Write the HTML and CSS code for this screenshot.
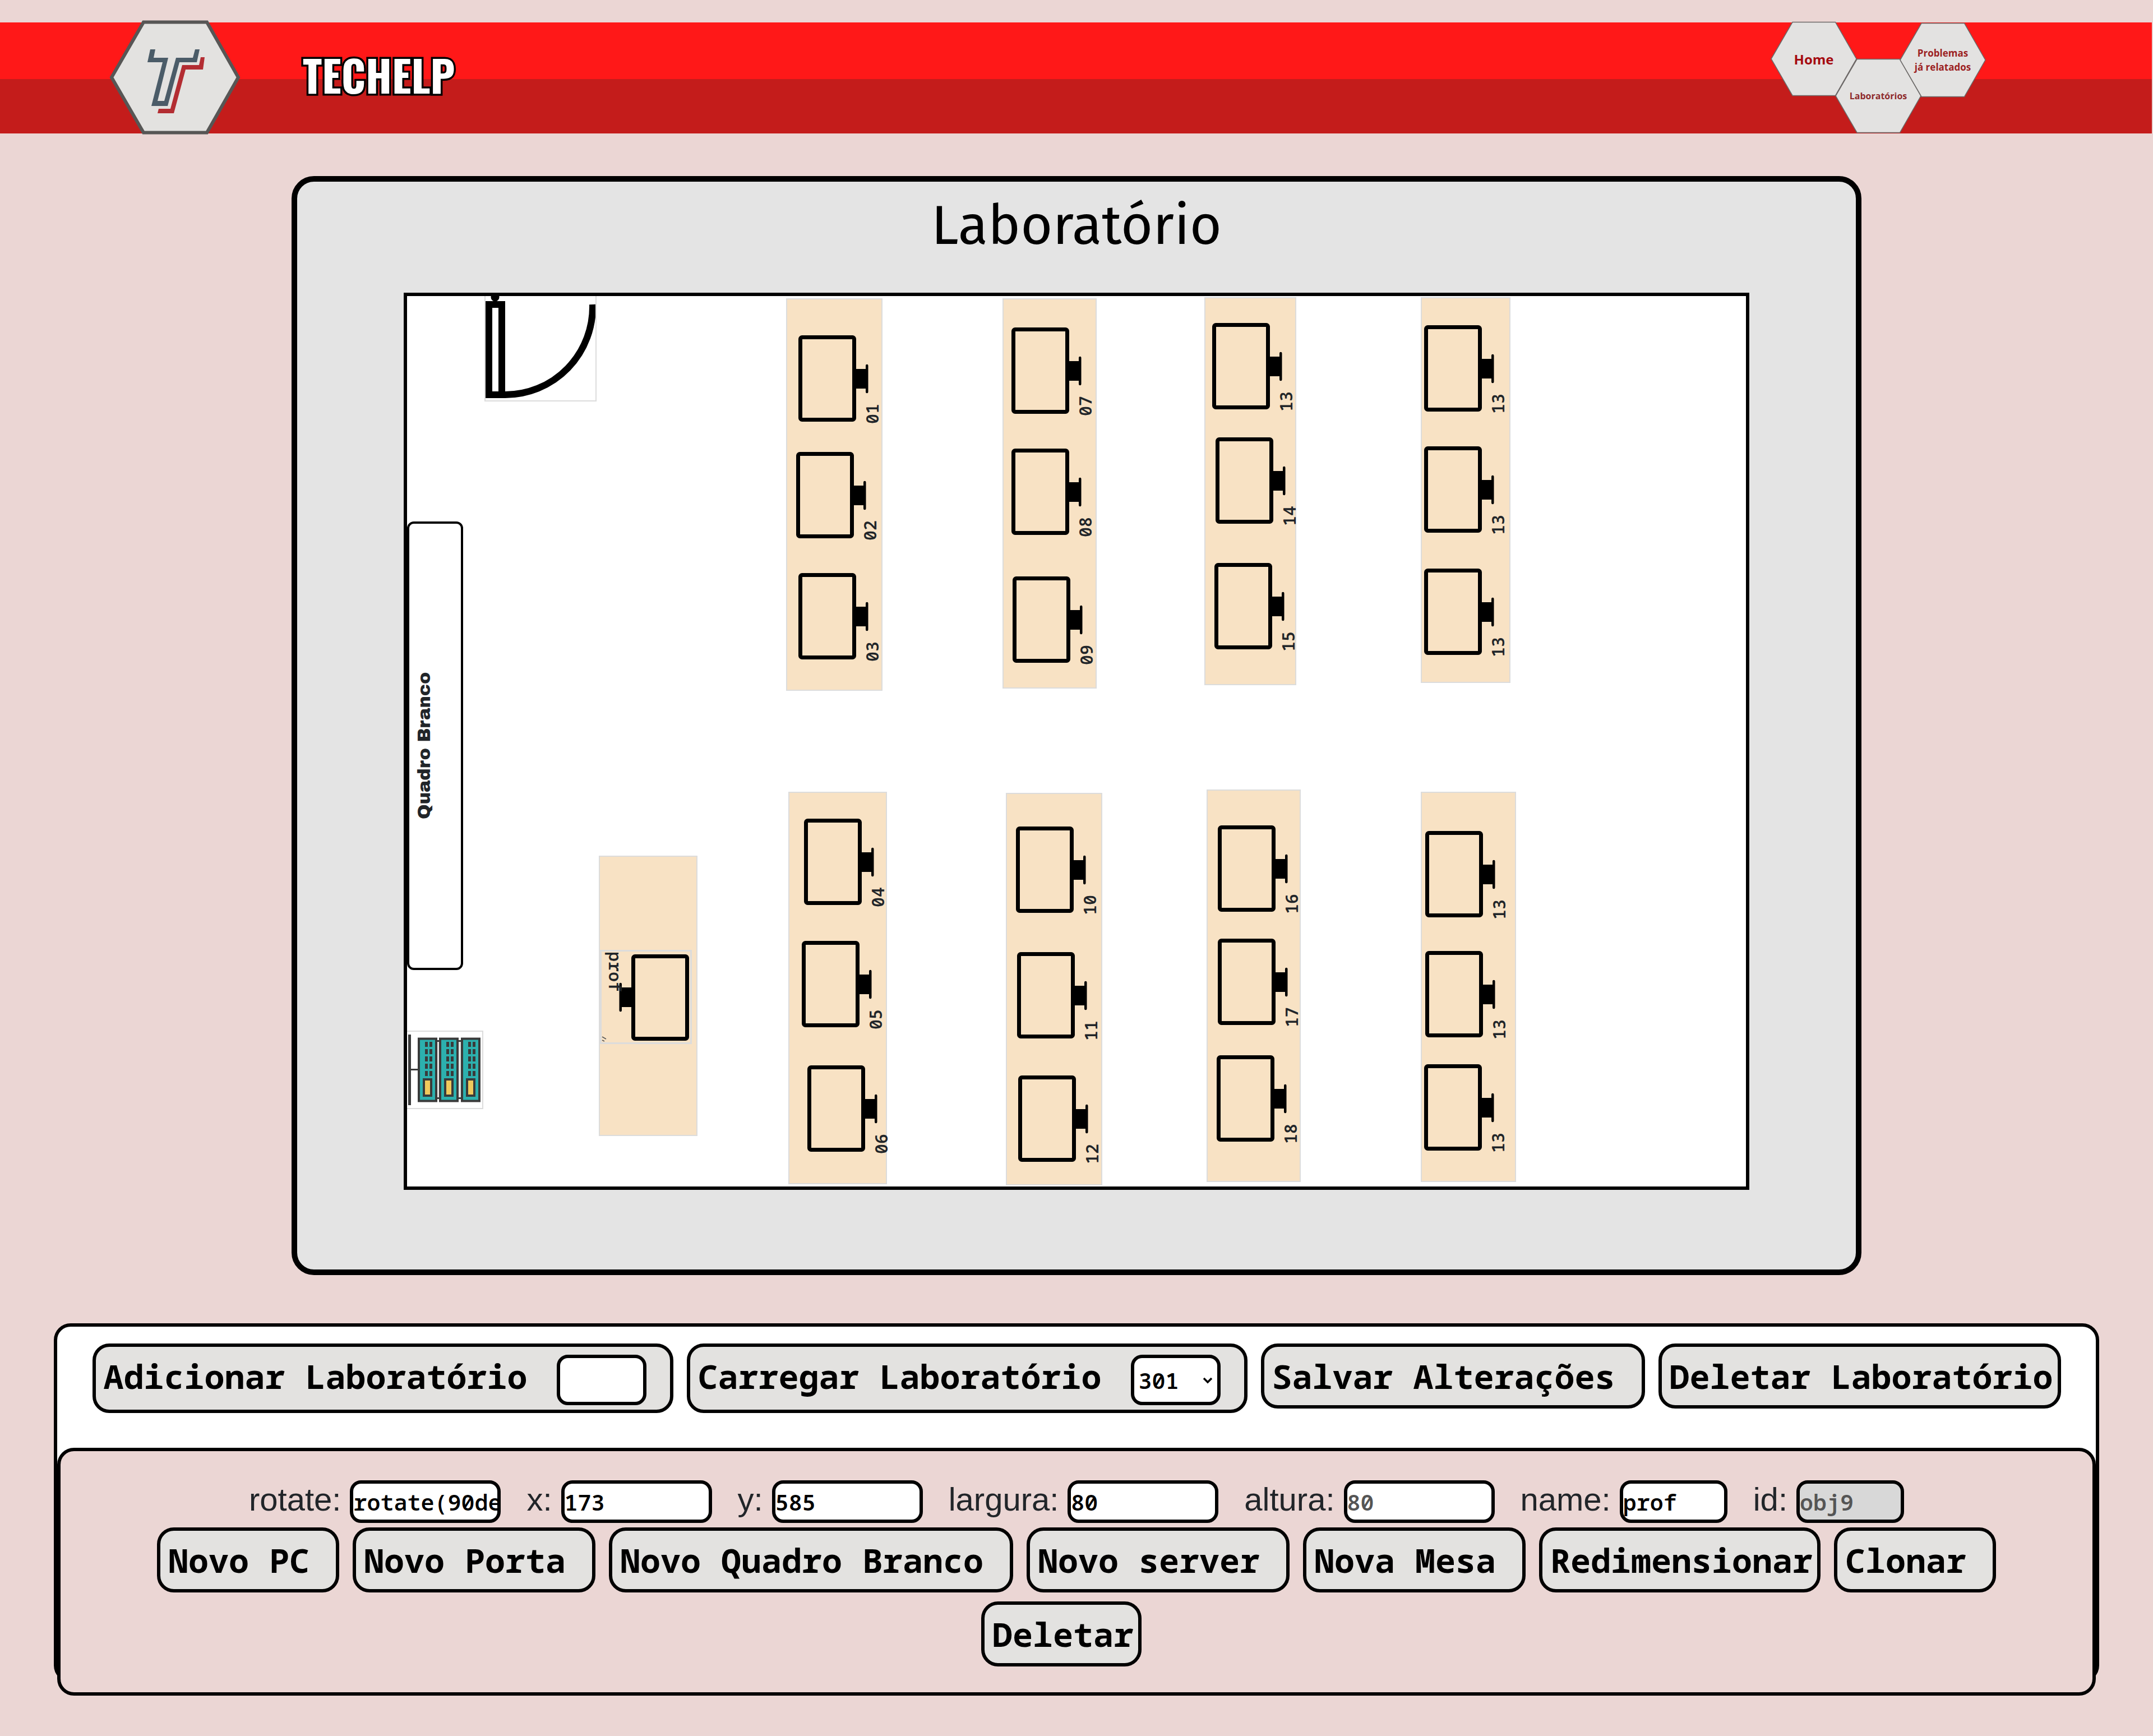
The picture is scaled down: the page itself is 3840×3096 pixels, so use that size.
FILE: index.html
```
<!DOCTYPE html>
<html lang="pt-BR">
<head>
<meta charset="utf-8">
<title>TECHELP - Laboratório</title>
<link rel="stylesheet" href="styles.css">
</head>
<body>
<svg class="symbols" aria-hidden="true">
  <symbol id="pc" viewBox="0 0 126 154">
    <rect x="3.5" y="3.5" width="96" height="147" rx="3" fill="none" stroke="#000" stroke-width="7"/>
    <path d="M102 60h18v-6a2 2 0 0 1 4.500 0v47a2 2 0 0 1-4.500 0v-6h-18z"/>
  </symbol>
  <symbol id="hex" viewBox="0 0 154 134">
    <path d="M1 67 39 1.500h76.500L153 67l-37.500 65.500H39z" fill="#e3e2e1" stroke="#6b6867" stroke-width="1.500"/>
  </symbol>
</svg>

<header class="topbar">
  <svg class="logo" viewBox="0 1 240 212" role="img" aria-label="Techelp">
    <path d="M7 106 64 7.500h113L233 106l-56 98.500H64z" fill="#e3e2e0" stroke="#575655" stroke-width="6"/>
    <path fill="#4b5c68" d="M76 56h9l-3 15h26L89 148h12l21-77h30l4-15h8l-5 23h-31l-21 78H78l20-78H71z"/>
    <path fill="#b32d32" d="M166 70h7l-3 22h-31l-21 78H89l2-8h21l21-78h30z"/>
  </svg>
  <span class="brand">TECHELP</span>
  <nav class="nav">
    <a class="nav-link nav-home" href="#home"><svg class="hex"><use href="#hex"/></svg><span>Home</span></a>
    <a class="nav-link nav-labs" href="#labs"><svg class="hex"><use href="#hex"/></svg><span>Laboratórios</span></a>
    <a class="nav-link nav-issues" href="#issues"><svg class="hex"><use href="#hex"/></svg><span>Problemas<br>já relatados</span></a>
  </nav>
</header>

<main>
  <section class="lab">
    <h1 class="lab-title">Laboratório</h1>
    <div class="room">
      <svg class="item framed" style="left:138px;top:-12px" width="200" height="200" viewBox="2 2 196 196">
        <circle cx="19" cy="14" r="7.500"/>
        <path d="M8 27h23v161H8zM37 188A156 157 0 0 0 193 27" fill="none" stroke="#000" stroke-width="12"/>
      </svg>
      <div class="item whiteboard" style="left:0px;top:402px"><span>Quadro Branco</span></div>
      <svg class="item framed" style="left:-4px;top:1310px" width="140" height="140" viewBox="-2 2 136 136">
        <g fill="#3a3a3a">
          <path d="M2 7h5v126H2zM7 68h13v3H7z"/>
          <path d="M52 18h46v102H52z" fill="#e6e6e6"/>
          <path d="M52 17h46v3H52zM52 119h46v3H52z"/>
        </g>
        <g id="rack">
          <rect x="21" y="14.500" width="31" height="111" fill="#2cb0ae" stroke="#3a3a3a" stroke-width="4"/>
          <path d="M32 20h5v9h-5zM40 20h5v9h-5zM32 33h5v9h-5zM40 33h5v9h-5zM32 46h5v9h-5zM40 46h5v9h-5zM32 59h5v9h-5zM40 59h5v9h-5zM32 72h5v9h-5zM40 72h5v9h-5z" fill="#3a3a3a"/>
          <rect x="30" y="87" width="13" height="29" fill="#f0c95c" stroke="#3a3a3a" stroke-width="4"/>
        </g>
        <use href="#rack" x="38"/>
        <use href="#rack" x="77"/>
      </svg>

      <div class="item desk" style="left:342px;top:998px;width:176px;height:500px"></div>
      <div class="item desk" style="left:676px;top:4px;width:172px;height:700px"></div>
      <div class="item desk" style="left:1062px;top:4px;width:168px;height:696px"></div>
      <div class="item desk" style="left:1422px;top:2px;width:164px;height:692px"></div>
      <div class="item desk" style="left:1808px;top:2px;width:160px;height:688px"></div>
      <div class="item desk" style="left:680px;top:884px;width:176px;height:700px"></div>
      <div class="item desk" style="left:1068px;top:886px;width:172px;height:700px"></div>
      <div class="item desk" style="left:1426px;top:880px;width:168px;height:700px"></div>
      <div class="item desk" style="left:1808px;top:884px;width:170px;height:696px"></div>

      <div class="item pc" style="left:698px;top:70px"><svg><use href="#pc"/></svg><span>01</span></div>
      <div class="item pc" style="left:694px;top:278px"><svg><use href="#pc"/></svg><span>02</span></div>
      <div class="item pc" style="left:698px;top:494px"><svg><use href="#pc"/></svg><span>03</span></div>
      <div class="item pc" style="left:708px;top:932px"><svg><use href="#pc"/></svg><span>04</span></div>
      <div class="item pc" style="left:704px;top:1150px"><svg><use href="#pc"/></svg><span>05</span></div>
      <div class="item pc" style="left:714px;top:1372px"><svg><use href="#pc"/></svg><span>06</span></div>
      <div class="item pc" style="left:1078px;top:56px"><svg><use href="#pc"/></svg><span>07</span></div>
      <div class="item pc" style="left:1078px;top:272px"><svg><use href="#pc"/></svg><span>08</span></div>
      <div class="item pc" style="left:1080px;top:500px"><svg><use href="#pc"/></svg><span>09</span></div>
      <div class="item pc" style="left:1086px;top:946px"><svg><use href="#pc"/></svg><span>10</span></div>
      <div class="item pc" style="left:1088px;top:1170px"><svg><use href="#pc"/></svg><span>11</span></div>
      <div class="item pc" style="left:1090px;top:1390px"><svg><use href="#pc"/></svg><span>12</span></div>
      <div class="item pc" style="left:1436px;top:48px"><svg><use href="#pc"/></svg><span>13</span></div>
      <div class="item pc" style="left:1442px;top:252px"><svg><use href="#pc"/></svg><span>14</span></div>
      <div class="item pc" style="left:1440px;top:476px"><svg><use href="#pc"/></svg><span>15</span></div>
      <div class="item pc" style="left:1446px;top:944px"><svg><use href="#pc"/></svg><span>16</span></div>
      <div class="item pc" style="left:1446px;top:1146px"><svg><use href="#pc"/></svg><span>17</span></div>
      <div class="item pc" style="left:1444px;top:1354px"><svg><use href="#pc"/></svg><span>18</span></div>
      <div class="item pc" style="left:1814px;top:52px"><svg><use href="#pc"/></svg><span>13</span></div>
      <div class="item pc" style="left:1814px;top:268px"><svg><use href="#pc"/></svg><span>13</span></div>
      <div class="item pc" style="left:1814px;top:486px"><svg><use href="#pc"/></svg><span>13</span></div>
      <div class="item pc" style="left:1816px;top:954px"><svg><use href="#pc"/></svg><span>13</span></div>
      <div class="item pc" style="left:1816px;top:1168px"><svg><use href="#pc"/></svg><span>13</span></div>
      <div class="item pc" style="left:1814px;top:1370px"><svg><use href="#pc"/></svg><span>13</span></div>

      <div class="item pc-selected" style="left:344px;top:1166px">
        <svg viewBox="0 0 160 164"><use href="#pc" x="-156" y="-159" width="126" height="154" transform="rotate(180)"/><path d="M1 152l7 4M1 158l4 2" stroke="#555" stroke-width="1.500"/></svg>
        <span>prof</span>
      </div>
    </div>
  </section>

  <section class="controls">
    <div class="lab-actions">
      <div class="action-box">
        <button type="button" class="plain" id="add-lab">Adicionar Laboratório</button>
        <input class="mini" type="text" aria-labelledby="add-lab">
      </div>
      <div class="action-box">
        <button type="button" class="plain" id="load-lab">Carregar Laboratório</button>
        <span class="select-wrap">
          <select class="mini" aria-labelledby="load-lab"><option>301</option></select>
          <svg viewBox="0 0 18 12"><path d="M2 2l7 7 7-7" fill="none" stroke="#000" stroke-width="3.500"/></svg>
        </span>
      </div>
      <button type="button" class="button roomy">Salvar Alterações</button>
      <button type="button" class="button">Deletar Laboratório</button>
    </div>

    <form class="editor">
      <div class="fields">
        <div class="field"><label for="rotate">rotate:</label><input id="rotate" type="text" value="rotate(90deg)"></div>
        <div class="field"><label for="pos-x">x:</label><input id="pos-x" type="text" value="173"></div>
        <div class="field"><label for="pos-y">y:</label><input id="pos-y" type="text" value="585"></div>
        <div class="field"><label for="width">largura:</label><input id="width" type="text" value="80"></div>
        <div class="field"><label for="height">altura:</label><input id="height" type="text" class="muted" value="80"></div>
        <div class="field"><label for="name">name:</label><input id="name" type="text" class="short" value="prof"></div>
        <div class="field"><label for="obj-id">id:</label><input id="obj-id" type="text" class="short" value="obj9" disabled></div>
      </div>
      <div class="buttons">
        <button type="button" class="button roomy">Novo PC</button>
        <button type="button" class="button roomy">Novo Porta</button>
        <button type="button" class="button roomy">Novo Quadro Branco</button>
        <button type="button" class="button roomy">Novo server</button>
        <button type="button" class="button roomy">Nova Mesa</button>
        <button type="button" class="button">Redimensionar</button>
        <button type="button" class="button roomy">Clonar</button>
        <button type="button" class="button delete">Deletar</button>
      </div>
    </form>
  </section>
</main>
</body>
</html>
```
FILE: styles.css
```
* { box-sizing: border-box; }

body {
  margin: 0;
  padding: 40px 0 72px;
  background: #ebd6d4;
  color: #212529;
  font-family: "Liberation Sans", Arial, sans-serif;
}

.symbols { display: none; }

/* Header */
.topbar {
  display: flex;
  align-items: center;
  height: 198px;
  margin-right: 2px;
  padding: 0 296px 0 192px;
  background: linear-gradient(#ff1818 0 101px, #c41c1b 101px);
}
.logo { width: 240px; height: 212px; margin: -8px 0; flex: none; }
.brand {
  margin-left: 108px;
  padding-bottom: 14px;
  font-family: Oswald, Anton, "Roboto Condensed", sans-serif;
  font-weight: 700;
  font-size: 77px;
  line-height: 100px;
  color: #fff;
  -webkit-text-stroke: 7px #000;
  paint-order: stroke fill;
}
.nav { display: flex; margin-left: auto; height: 198px; }
.nav-link {
  position: relative;
  display: flex;
  align-items: center;
  justify-content: center;
  width: 154px;
  height: 134px;
  margin-top: -2px;
  font-family: "Open Sans", sans-serif;
  font-weight: 700;
  text-align: center;
  text-decoration: none;
  color: #9c1f22;
}
.nav-link span { position: relative; }
.nav-link + .nav-link { margin-left: -39px; }
.hex { position: absolute; inset: 0; width: 154px; height: 134px; }
.nav-home { font-size: 24px; color: #a50a10; }
.nav-labs { margin-top: 64px; font-size: 16px; color: #8e2a2c; }
.nav-issues { margin-top: 0; font-size: 17px; line-height: 25px; }

/* Lab plan */
.lab {
  width: 2800px;
  max-width: 100%;
  margin: 76px auto 0;
  padding: 0 190px 142px;
  border: 10px solid #000;
  border-radius: 40px;
  background: #e4e4e4;
}
.lab-title {
  margin: 0;
  padding: 8px 0 50px;
  font-family: "Trebuchet MS", "Fira Sans", "Noto Sans", sans-serif;
  font-size: 98px;
  line-height: 140px;
  font-weight: 400;
  color: #000;
  text-align: center;
}
.room {
  position: relative;
  height: 1600px;
  overflow: hidden;
  border: 6px solid #000;
  background: #fff;
}
.item { position: absolute; }
.framed { border: 2px solid #dcdcdc; }
.desk { border: 2px solid #dcdcdc; background: #f8e2c4; }
.whiteboard {
  width: 100px;
  height: 800px;
  display: flex;
  justify-content: center;
  padding-right: 38px;
  border: 4px solid #000;
  border-radius: 12px;
  font-family: "Arial Black", "Archivo Black", "Open Sans", sans-serif;
  font-weight: 400;
  font-size: 32px;
  line-height: 40px;
}
.whiteboard span { writing-mode: vertical-rl; transform: rotate(180deg); text-align: center; }
.pc,
.pc-selected {
  font-family: "Noto Sans Mono", monospace;
  font-size: 30px;
  font-weight: 600;
  line-height: 28px;
}
.pc { display: flex; width: 150px; height: 158px; }
.pc svg { width: 126px; height: 154px; flex: none; }
.pc span { writing-mode: vertical-rl; transform: rotate(180deg); margin-left: -8px; }
.pc-selected { width: 164px; height: 168px; border: 3px solid #dcdcdc; }
.pc-selected svg { position: absolute; left: 0; top: 0; width: 160px; height: 164px; }
.pc-selected span { position: absolute; left: 10px; top: 0; writing-mode: vertical-rl; }

/* Controls */
.controls {
  width: 95%;
  margin: 86px auto 0;
  padding-top: 30px;
  border: 6px solid #000;
  border-radius: 30px;
  background: #fff;
}
.lab-actions, .buttons, .fields { display: flex; flex-wrap: wrap; justify-content: center; }
.lab-actions { align-items: flex-start; gap: 16px 24px; }
.button, .action-box {
  border: 6px solid #000;
  border-radius: 30px;
  background: #e3e2e0;
}
.button, .plain {
  font-family: "Noto Sans Mono", monospace;
  font-weight: 700;
  font-size: 60px;
  line-height: 72px;
  color: #000;
}
.button { height: 116px; padding: 0 8px 0 14px; }
.roomy { padding-right: 47px; }
.action-box { display: flex; align-items: baseline; gap: 52px; padding: 14px 42px 8px 14px; }
.plain { padding: 0; border: 0; background: none; }
input, select {
  border: 6px solid #000;
  border-radius: 20px;
  background: #fff;
  color: #000;
  font-family: "Noto Sans Mono", monospace;
  font-weight: 600;
  font-size: 40px;
}
.mini { width: 160px; height: 90px; padding: 0 8px; appearance: none; }
.select-wrap { position: relative; }
.select-wrap svg { position: absolute; right: 14px; top: 40px; width: 18px; height: 12px; }

.editor {
  margin: 62px 0 -30px;
  padding: 52px 100px 46px;
  border: 6px solid #000;
  border-radius: 30px;
  background: #ebd6d4;
}
.fields { gap: 16px 46px; margin-bottom: 8px; }
.field { display: flex; align-items: baseline; gap: 16px; height: 76px; }
.field label { font-size: 58px; line-height: 64px; }
.field input { width: 269px; height: 76px; padding: 0; }
.field .short { width: 192px; }
.field .muted { color: #555; }
.field input:disabled { background: #d8d8d8; color: #555; }
.buttons { gap: 16px 24px; }
.delete { margin-right: 54px; }
```
